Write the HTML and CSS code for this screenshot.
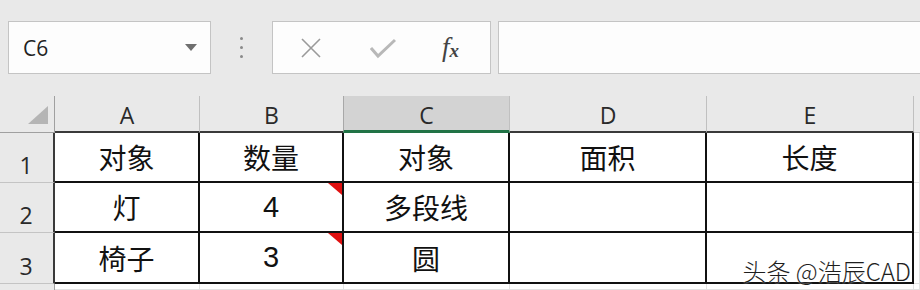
FILE: index.html
```html
<!DOCTYPE html>
<html lang="zh-CN">
<head>
  <meta charset="UTF-8">
  <title>C6</title>
  <link rel="stylesheet" href="styles.css">
</head>
<body>
  <div class="toolbar">
    <div class="name-box">
      <span>C6</span>
      <span class="caret"></span>
    </div>
    <div class="grip">
      <i></i><i></i><i></i>
    </div>
    <div class="fx-box">
      <svg class="ico" width="22" height="22" viewBox="0 0 22 22">
        <path d="M2 2 L20 20 M20 2 L2 20" stroke="#9a9a9a" stroke-width="1.6" fill="none"/>
      </svg>
      <svg class="ico" width="26" height="22" viewBox="0 0 26 22">
        <path d="M1 11 L8 19 L25 3" stroke="#b8b8b8" stroke-width="3" fill="none"/>
      </svg>
      <span class="fx">f<sub>x</sub></span>
    </div>
    <div class="formula"></div>
  </div>

  <div class="sheet">
    <div class="hd corner"><span class="tri"></span></div>
    <div class="hd col">A</div>
    <div class="hd col">B</div>
    <div class="hd col active">C</div>
    <div class="hd col">D</div>
    <div class="hd col">E</div>
    <div class="hd col last"></div>

    <div class="hd row">1</div>
    <div class="cell">对象</div>
    <div class="cell">数量</div>
    <div class="cell">对象</div>
    <div class="cell">面积</div>
    <div class="cell">长度</div>
    <div class="cell blank"></div>

    <div class="hd row">2</div>
    <div class="cell">灯</div>
    <div class="cell num">4<span class="note"></span></div>
    <div class="cell">多段线</div>
    <div class="cell"></div>
    <div class="cell"></div>
    <div class="cell blank"></div>

    <div class="hd row">3</div>
    <div class="cell">椅子</div>
    <div class="cell num">3<span class="note"></span></div>
    <div class="cell">圆</div>
    <div class="cell"></div>
    <div class="cell"></div>
    <div class="cell blank"></div>

    <div class="hd row end"></div>
    <div class="cell blank"></div>
    <div class="cell blank"></div>
    <div class="cell blank"></div>
    <div class="cell blank"></div>
    <div class="cell blank"></div>
    <div class="cell blank"></div>

    <div class="mark">头条 @浩辰CAD</div>
  </div>
</body>
</html>
```

FILE: styles.css
```css
body {
  margin: 0;
  width: 920px;
  height: 290px;
  overflow: hidden;
  background: #e9e9e9;
  font-family: "Liberation Sans", "Noto Sans CJK SC", sans-serif;
  color: #1a1a1a;
}

.toolbar {
  display: flex;
  height: 96px;
  box-sizing: border-box;
  padding: 21px 0 0 8px;
  margin-right: -6px;
}

.name-box {
  width: 203px;
  height: 53px;
  box-sizing: border-box;
  background: #fdfdfd;
  border: 1px solid #c4c4c4;
  display: flex;
  align-items: center;
  justify-content: space-between;
  padding: 0 13px 0 14px;
  font-family: "Open Sans", sans-serif;
  font-size: 21px;
  color: #222;
}

.caret {
  width: 0;
  height: 0;
  border-left: 6px solid transparent;
  border-right: 6px solid transparent;
  border-top: 7px solid #6f6f6f;
}

.grip {
  width: 61px;
  display: flex;
  flex-direction: column;
  align-items: center;
  justify-content: center;
  gap: 6px;
  height: 53px;
}

.grip i {
  width: 3px;
  height: 3px;
  border-radius: 50%;
  background: #8a8a8a;
}

.fx-box {
  width: 219px;
  height: 53px;
  box-sizing: border-box;
  background: #fdfdfd;
  border: 1px solid #c4c4c4;
  display: flex;
  align-items: center;
  padding: 0 0 0 27px;
}

.fx-box .ico:nth-child(2) {
  margin-left: 48px;
}

.fx {
  margin-left: 46px;
  font-family: "Liberation Serif", serif;
  font-style: italic;
  font-size: 27px;
  color: #444;
}

.fx sub {
  font-size: 19px;
  font-weight: bold;
  vertical-align: baseline;
  position: relative;
  top: 1px;
  margin-left: 0;
}

.formula {
  flex: 1;
  height: 53px;
  margin-left: 7px;
  box-sizing: border-box;
  background: #fdfdfd;
  border: 1px solid #c4c4c4;
}

.sheet {
  position: relative;
  display: grid;
  grid-template-columns: 55px 145px 144px 166px 197px 207px 1fr;
  grid-template-rows: 37px 50px 50px 51px 1fr;
  height: 194px;
}

.hd {
  box-sizing: border-box;
  background: #e9e9e9;
  display: flex;
  justify-content: center;
  font-family: "Open Sans", sans-serif;
  font-size: 23px;
  color: #2a2a2a;
}

.col {
  align-items: flex-end;
  line-height: 1;
  padding-bottom: 4px;
  border-right: 1px solid #c0c0c0;
  border-bottom: 2px solid #3a3a3a;
}

.col.last {
  border-right: none;
  border-bottom: 1px solid #c8c8c8;
}

.col.active {
  background: #d3d3d3;
  border-left: 1px solid #a8a8a8;
  margin-left: -1px;
  border-bottom: 3px solid #217346;
  padding-bottom: 3px;
}

.corner {
  position: relative;
  border-right: 1px solid #a0a0a0;
  border-bottom: 1px solid #a0a0a0;
}

.tri {
  position: absolute;
  right: 6px;
  bottom: 8px;
  width: 0;
  height: 0;
  border-left: 20px solid transparent;
  border-bottom: 18px solid #b5b5b5;
}

.row {
  align-items: flex-end;
  line-height: 1;
  padding-bottom: 5px;
  border-right: 2px solid #3a3a3a;
  border-bottom: 1px solid #c4c4c4;
  margin-left: -1px;
}

.row.end {
  border-right: 1px solid #a0a0a0;
  border-bottom: none;
}

.cell {
  position: relative;
  box-sizing: border-box;
  background: #fff;
  border-right: 2px solid #111;
  border-bottom: 2px solid #111;
  display: flex;
  align-items: center;
  justify-content: center;
  font-size: 28px;
  color: #111;
}

.cell.num {
  font-size: 29px;
}

.cell.blank {
  border-right: 1px solid #e2e2e2;
  border-bottom: 1px solid #e2e2e2;
}

.note {
  position: absolute;
  top: 0;
  right: 0;
  width: 0;
  height: 0;
  border-left: 14px solid transparent;
  border-top: 12px solid #e01010;
}

.mark {
  position: absolute;
  right: 9px;
  top: 157px;
  font-family: "Noto Sans CJK SC", sans-serif;
  font-weight: 300;
  font-size: 24px;
  color: #1e1e1e;
  text-shadow: 0 0 2px #fff;
}
```
